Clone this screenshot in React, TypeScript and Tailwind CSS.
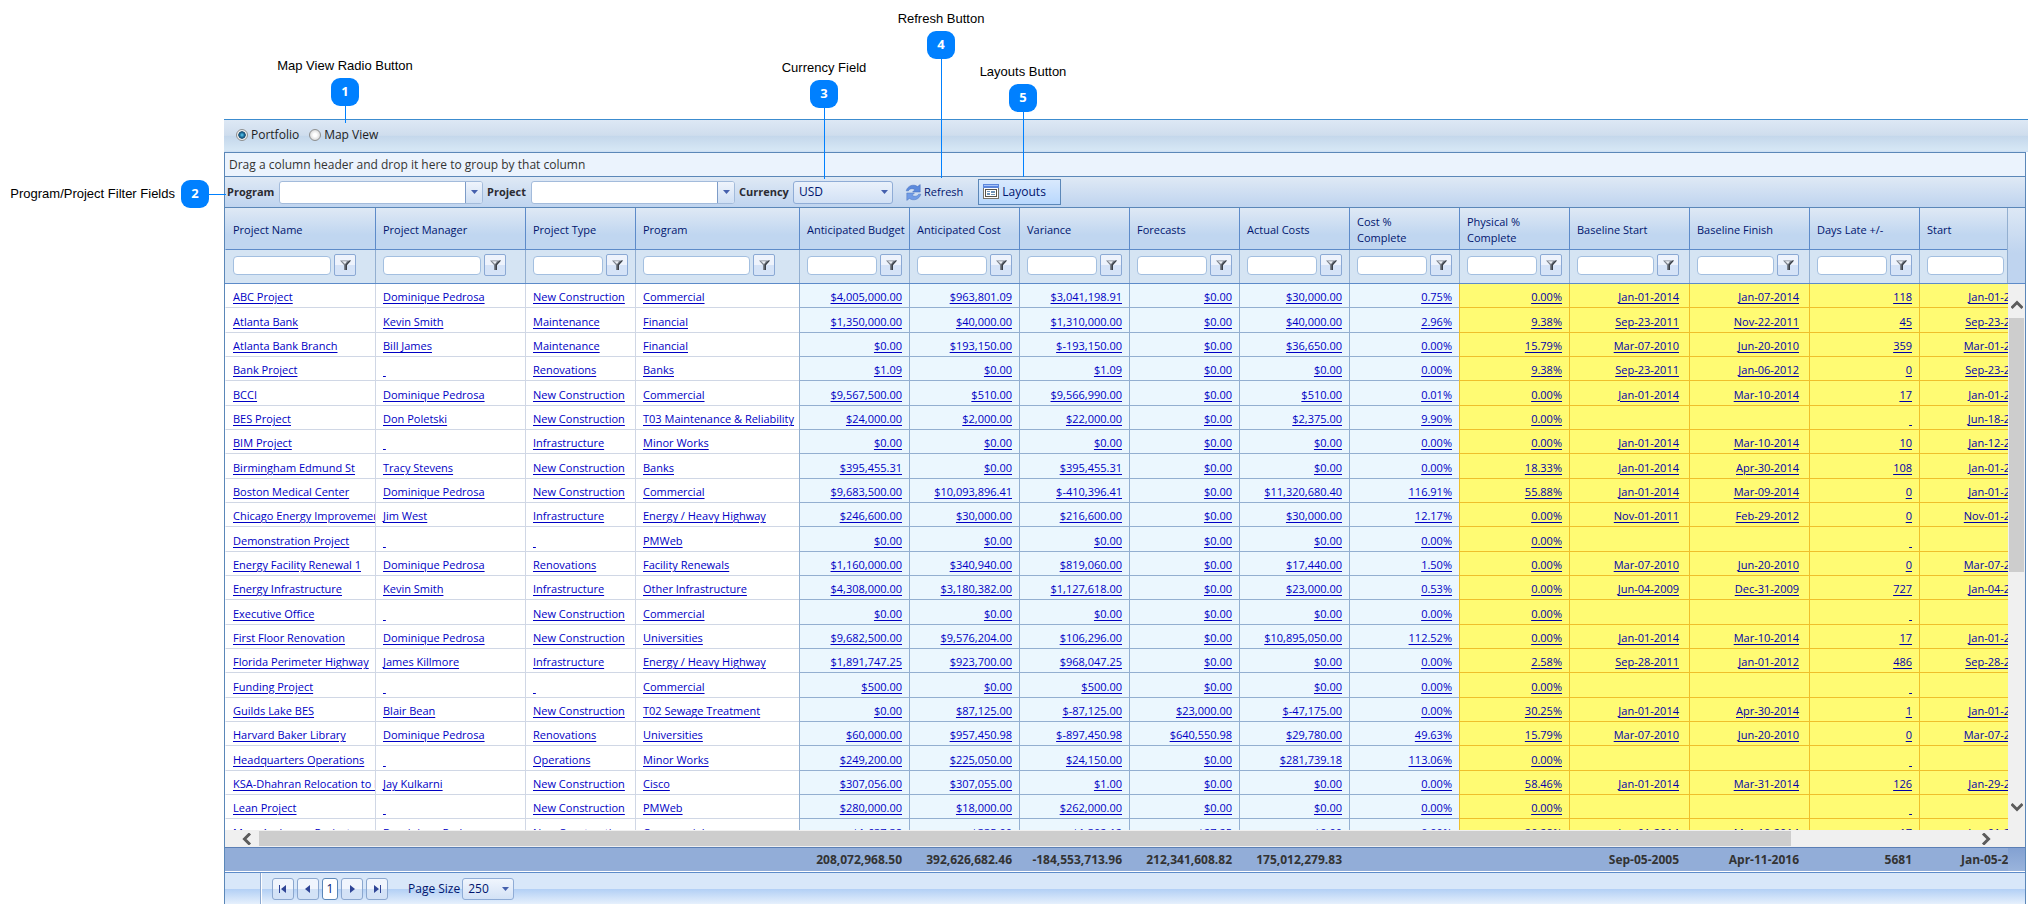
import React, { useState } from "react";

type Tone = "plain" | "cost" | "date";

interface Column {
  title: string;
  width: string;
  filter: string;
  tone: Tone;
  align: string;
  total?: string;
}

const columns: Column[] = [
  { title: "Project Name", width: "w-[150px]", filter: "w-[98px]", tone: "plain", align: "text-left" },
  { title: "Project Manager", width: "w-[150px]", filter: "w-[98px]", tone: "plain", align: "text-left" },
  { title: "Project Type", width: "w-[110px]", filter: "w-[70px]", tone: "plain", align: "text-left" },
  { title: "Program", width: "w-[164px]", filter: "w-[107px]", tone: "plain", align: "text-left" },
  { title: "Anticipated Budget", width: "w-[110px]", filter: "w-[70px]", tone: "cost", align: "text-right pr-[7px]", total: "208,072,968.50" },
  { title: "Anticipated Cost", width: "w-[110px]", filter: "w-[70px]", tone: "cost", align: "text-right pr-[7px]", total: "392,626,682.46" },
  { title: "Variance", width: "w-[110px]", filter: "w-[70px]", tone: "cost", align: "text-right pr-[7px]", total: "-184,553,713.96" },
  { title: "Forecasts", width: "w-[110px]", filter: "w-[70px]", tone: "cost", align: "text-right pr-[7px]", total: "212,341,608.82" },
  { title: "Actual Costs", width: "w-[110px]", filter: "w-[70px]", tone: "cost", align: "text-right pr-[7px]", total: "175,012,279.83" },
  { title: "Cost %\nComplete", width: "w-[110px]", filter: "w-[70px]", tone: "cost", align: "text-right pr-[7px]" },
  { title: "Physical %\nComplete", width: "w-[110px]", filter: "w-[70px]", tone: "date", align: "text-right pr-[7px]" },
  { title: "Baseline Start", width: "w-[120px]", filter: "w-[77px]", tone: "date", align: "text-right pr-[10px]", total: "Sep-05-2005" },
  { title: "Baseline Finish", width: "w-[120px]", filter: "w-[77px]", tone: "date", align: "text-right pr-[10px]", total: "Apr-11-2016" },
  { title: "Days Late +/-", width: "w-[110px]", filter: "w-[70px]", tone: "date", align: "text-right pr-[7px]", total: "5681" },
  { title: "Start", width: "w-[120px]", filter: "w-[77px]", tone: "date", align: "text-right pr-[10px]", total: "Jan-05-2009" },
];

// "_" is an empty link, "" is an empty cell
const projects: string[][] = [
  ["ABC Project", "Dominique Pedrosa", "New Construction", "Commercial", "$4,005,000.00", "$963,801.09", "$3,041,198.91", "$0.00", "$30,000.00", "0.75%", "0.00%", "Jan-01-2014", "Jan-07-2014", "118", "Jan-01-2014"],
  ["Atlanta Bank", "Kevin Smith", "Maintenance", "Financial", "$1,350,000.00", "$40,000.00", "$1,310,000.00", "$0.00", "$40,000.00", "2.96%", "9.38%", "Sep-23-2011", "Nov-22-2011", "45", "Sep-23-2011"],
  ["Atlanta Bank Branch", "Bill James", "Maintenance", "Financial", "$0.00", "$193,150.00", "$-193,150.00", "$0.00", "$36,650.00", "0.00%", "15.79%", "Mar-07-2010", "Jun-20-2010", "359", "Mar-01-2010"],
  ["Bank Project", "_", "Renovations", "Banks", "$1.09", "$0.00", "$1.09", "$0.00", "$0.00", "0.00%", "9.38%", "Sep-23-2011", "Jan-06-2012", "0", "Sep-23-2011"],
  ["BCCI", "Dominique Pedrosa", "New Construction", "Commercial", "$9,567,500.00", "$510.00", "$9,566,990.00", "$0.00", "$510.00", "0.01%", "0.00%", "Jan-01-2014", "Mar-10-2014", "17", "Jan-01-2014"],
  ["BES Project", "Don Poletski", "New Construction", "T03 Maintenance & Reliability", "$24,000.00", "$2,000.00", "$22,000.00", "$0.00", "$2,375.00", "9.90%", "0.00%", "", "", "_", "Jun-18-2013"],
  ["BIM Project", "_", "Infrastructure", "Minor Works", "$0.00", "$0.00", "$0.00", "$0.00", "$0.00", "0.00%", "0.00%", "Jan-01-2014", "Mar-10-2014", "10", "Jan-12-2014"],
  ["Birmingham Edmund St", "Tracy Stevens", "New Construction", "Banks", "$395,455.31", "$0.00", "$395,455.31", "$0.00", "$0.00", "0.00%", "18.33%", "Jan-01-2014", "Apr-30-2014", "108", "Jan-01-2014"],
  ["Boston Medical Center", "Dominique Pedrosa", "New Construction", "Commercial", "$9,683,500.00", "$10,093,896.41", "$-410,396.41", "$0.00", "$11,320,680.40", "116.91%", "55.88%", "Jan-01-2014", "Mar-09-2014", "0", "Jan-01-2014"],
  ["Chicago Energy Improvement", "Jim West", "Infrastructure", "Energy / Heavy Highway", "$246,600.00", "$30,000.00", "$216,600.00", "$0.00", "$30,000.00", "12.17%", "0.00%", "Nov-01-2011", "Feb-29-2012", "0", "Nov-01-2011"],
  ["Demonstration Project", "_", "_", "PMWeb", "$0.00", "$0.00", "$0.00", "$0.00", "$0.00", "0.00%", "0.00%", "", "", "_", ""],
  ["Energy Facility Renewal 1", "Dominique Pedrosa", "Renovations", "Facility Renewals", "$1,160,000.00", "$340,940.00", "$819,060.00", "$0.00", "$17,440.00", "1.50%", "0.00%", "Mar-07-2010", "Jun-20-2010", "0", "Mar-07-2010"],
  ["Energy Infrastructure", "Kevin Smith", "Infrastructure", "Other Infrastructure", "$4,308,000.00", "$3,180,382.00", "$1,127,618.00", "$0.00", "$23,000.00", "0.53%", "0.00%", "Jun-04-2009", "Dec-31-2009", "727", "Jan-04-2009"],
  ["Executive Office", "_", "New Construction", "Commercial", "$0.00", "$0.00", "$0.00", "$0.00", "$0.00", "0.00%", "0.00%", "", "", "_", ""],
  ["First Floor Renovation", "Dominique Pedrosa", "New Construction", "Universities", "$9,682,500.00", "$9,576,204.00", "$106,296.00", "$0.00", "$10,895,050.00", "112.52%", "0.00%", "Jan-01-2014", "Mar-10-2014", "17", "Jan-01-2014"],
  ["Florida Perimeter Highway", "James Killmore", "Infrastructure", "Energy / Heavy Highway", "$1,891,747.25", "$923,700.00", "$968,047.25", "$0.00", "$0.00", "0.00%", "2.58%", "Sep-28-2011", "Jan-01-2012", "486", "Sep-28-2011"],
  ["Funding Project", "_", "_", "Commercial", "$500.00", "$0.00", "$500.00", "$0.00", "$0.00", "0.00%", "0.00%", "", "", "_", ""],
  ["Guilds Lake BES", "Blair Bean", "New Construction", "T02 Sewage Treatment", "$0.00", "$87,125.00", "$-87,125.00", "$23,000.00", "$-47,175.00", "0.00%", "30.25%", "Jan-01-2014", "Apr-30-2014", "1", "Jan-01-2014"],
  ["Harvard Baker Library", "Dominique Pedrosa", "Renovations", "Universities", "$60,000.00", "$957,450.98", "$-897,450.98", "$640,550.98", "$29,780.00", "49.63%", "15.79%", "Mar-07-2010", "Jun-20-2010", "0", "Mar-07-2010"],
  ["Headquarters Operations", "_", "Operations", "Minor Works", "$249,200.00", "$225,050.00", "$24,150.00", "$0.00", "$281,739.18", "113.06%", "0.00%", "", "", "_", ""],
  ["KSA-Dhahran Relocation to D", "Jay Kulkarni", "New Construction", "Cisco", "$307,056.00", "$307,055.00", "$1.00", "$0.00", "$0.00", "0.00%", "58.46%", "Jan-01-2014", "Mar-31-2014", "126", "Jan-29-2014"],
  ["Lean Project", "_", "New Construction", "PMWeb", "$280,000.00", "$18,000.00", "$262,000.00", "$0.00", "$0.00", "0.00%", "0.00%", "", "", "_", ""],
  ["Mary Anderson Project", "Dominique Pedrosa", "New Construction", "Commercial", "$1,637.38", "$335.00", "$1,302.12", "$27.25", "$0.00", "0.00%", "20.28%", "Jan-01-2014", "Mar-10-2014", "17", "Jan-01-2014"],
];

const toneClass: Record<Tone, string> = {
  plain: "bg-white border-[#d0d7e5] text-[#0000c4]",
  cost: "bg-[#ebf7fe] border-[#93afd0] text-[#0000c4]",
  date: "bg-[#fffb73] border-[#efbf2b] text-[#0000a8]",
};

const callouts = [
  { n: 1, text: "Map View Radio Button", box: "left-[245px] top-[57px]", line: "h-[17px]" },
  { n: 3, text: "Currency Field", box: "left-[724px] top-[59px]", line: "h-[71px]" },
  { n: 4, text: "Refresh Button", box: "left-[841px] top-[10px]", line: "h-[119px]" },
  { n: 5, text: "Layouts Button", box: "left-[923px] top-[63px]", line: "h-[65px]" },
];

const Badge = ({ n }: { n: number }) => (
  <span className="flex h-[28px] w-[28px] shrink-0 items-center justify-center rounded-[9px] bg-[#0080ff] text-[13px] font-bold text-white">
    {n}
  </span>
);

const Caret = () => (
  <svg width="7" height="4" viewBox="0 0 7 4" aria-hidden="true">
    <path d="M0 0h7L3.500 4z" fill="#4560ad" />
  </svg>
);

const Combo = ({ id, label, labelWidth }: { id: string; label: string; labelWidth: string }) => (
  <div className="flex items-center">
    <label htmlFor={id} className={`${labelWidth} text-[11px] font-bold text-[#2b2b33]`}>
      {label}
    </label>
    <div className="flex h-[23px] w-[204px] overflow-hidden rounded-[3px] border border-[#a3bbdb] bg-white">
      <input id={id} type="text" className="min-w-0 flex-1 px-1 text-[12px] outline-none" />
      <button
        type="button"
        aria-label={`Open ${label} list`}
        className="flex w-[17px] items-center justify-center border-l border-[#7d9cc8] bg-linear-to-b from-[#eff4fc] to-[#cfdff4]"
      >
        <Caret />
      </button>
    </div>
  </div>
);

const RefreshIcon = () => (
  <svg width="17" height="17" viewBox="0 0 17 17" aria-hidden="true">
    <path d="M1.200 6.800C2.800 1.200 8.800-.2 12.600 2.600L15.200.6V8H7.600l2.300-2.300C7.600 4 4.400 4.600 3.400 6.800z" fill="#5b8add" stroke="#4069b8" strokeWidth=".5" />
    <path d="M15.800 10.200C14.200 15.800 8.200 17.200 4.400 14.400L1.800 16.400V9h7.600l-2.300 2.300c2.300 1.700 5.500 1.100 6.500-1.100z" fill="#719ce6" stroke="#4a74bf" strokeWidth=".5" />
  </svg>
);

const LayoutsIcon = () => (
  <svg width="16" height="16" viewBox="0 0 16 16" aria-hidden="true">
    <rect x=".5" y=".5" width="15" height="14" fill="#fff" stroke="#77736b" />
    <rect x="0" y="0" width="16" height="4" fill="#5b86dd" />
    <rect x="1" y="1" width="14" height="1" fill="#a9c4f7" />
    <rect x="2.500" y="5.500" width="11" height="7" fill="#fff" stroke="#57534a" />
    <path d="M4 7h3v1H4zM8 7h4v2H8zM4 9h3v2H4zM8 10h4v1H8z" fill="#6f93b8" />
  </svg>
);

const FilterIcon = () => (
  <svg width="11" height="10" viewBox="0 0 11 10" aria-hidden="true">
    <path d="M0 .5h11L7 5v5H4V5z" fill="#7d848e" />
    <path d="M2 1.300h5L5 4z" fill="#eef1f6" />
    <path d="M11 .5L7 5v5H5.500V4.600L9.500.5z" fill="#3a3f46" />
  </svg>
);

const Chevron = ({ d }: { d: string }) => (
  <svg width="12" height="12" viewBox="0 0 12 12" fill="none" stroke="#5c5c5c" strokeWidth="3" aria-hidden="true">
    <path d={d} />
  </svg>
);

const ColGroup = () => (
  <colgroup>
    {columns.map((c) => (
      <col key={c.title} className={c.width} />
    ))}
  </colgroup>
);

const PagerButton = ({ label, d }: { label: string; d: string }) => (
  <button
    type="button"
    aria-label={label}
    className="flex h-[22px] w-[22px] items-center justify-center rounded-[3px] border border-[#8ba7cf] bg-linear-to-b from-[#f0f5fd] from-50% to-[#d3e2f6] to-50%"
  >
    <svg width="8" height="8" viewBox="0 0 8 8" aria-hidden="true">
      <path d={d} fill="#2f4596" />
    </svg>
  </button>
);

export default function App() {
  const [view, setView] = useState("portfolio");
  const views = [
    { id: "portfolio", label: "Portfolio" },
    { id: "map", label: "Map View" },
  ];

  return (
    <div className="relative overflow-hidden bg-white font-['Open_Sans','Noto_Sans',sans-serif] text-[11px]">
      <div className="mt-[119px] mr-[3px] mb-[3px] ml-[224px]">
        {/* View switch */}
        <div className="flex h-[33px] items-center gap-[10px] border-t border-[#3c8ccf] bg-[linear-gradient(to_bottom,#dde8f5,#cfdded_48%,#c4d7eb_50%,#d6e7f5_94%,#c9dcf3)] pb-[3px] pl-[12px] text-[12px] text-[#1c1c24]">
          {views.map((v) => (
            <label key={v.id} className="flex items-center gap-[3px]">
              <input
                type="radio"
                name="view"
                checked={view === v.id}
                onChange={() => setView(v.id)}
                className="h-[12px] w-[12px] appearance-none rounded-full border border-[#8e8f8f] bg-[radial-gradient(circle_closest-side,#ffffff_30%,#dcdcdc)] checked:bg-[radial-gradient(circle_closest-side,#5fd0f5_0%,#1d6c99_45%,#134a70_68%,#eeeeee_80%)]"
              />
              {v.label}
            </label>
          ))}
        </div>

        <div className="mr-[2px] border-t border-r border-l border-[#5b87b8]">
          <div className="flex h-[23px] items-center bg-[#ebf3fd] px-1 text-[12px] text-[#333]">
            Drag a column header and drop it here to group by that column
          </div>

          {/* Toolbar */}
          <div className="flex h-[32px] items-center border-y border-[#5b87b8] bg-linear-to-b from-[#dfe9f5] to-[#bfd4ef] pl-[2px]">
            <div className="flex items-center gap-1">
              <Combo id="program" label="Program" labelWidth="w-[52px]" />
              <Combo id="project" label="Project" labelWidth="w-[44px]" />
              <div className="flex items-center">
                <label htmlFor="currency" className="w-[54px] text-[11px] font-bold text-[#2b2b33]">
                  Currency
                </label>
                <div className="relative">
                  <select
                    id="currency"
                    className="block h-[23px] w-[100px] appearance-none rounded-[3px] border border-[#8facd6] bg-linear-to-b from-[#eaf1fb] to-[#d2e1f5] pl-[5px] text-[12px] text-[#00156e]"
                  >
                    <option>USD</option>
                  </select>
                  <span className="pointer-events-none absolute top-[9px] right-[5px]">
                    <Caret />
                  </span>
                </div>
              </div>
            </div>
            <button type="button" className="ml-3 flex items-center gap-[2px] text-[11px] text-[#00156e]">
              <RefreshIcon />
              Refresh
            </button>
            <button
              type="button"
              className="ml-[15px] flex h-[26px] w-[83px] items-center gap-[3px] border border-[#5b87b8] bg-linear-to-b from-[#d9e9fd] to-[#b9d8fd] pl-1 text-[12px] text-[#00156e]"
            >
              <LayoutsIcon />
              Layouts
            </button>
          </div>

          {/* Column headers and filters */}
          <div className="flex border-b border-[#5d8bc9] bg-linear-to-b from-[#dde8f5] to-[#bfd4ef] to-60%">
            <div className="min-w-0 flex-1 overflow-hidden border-r border-[#93afd0]">
              <table className="w-[1814px] table-fixed border-separate border-spacing-0">
                <ColGroup />
                <thead>
                  <tr className="h-[42px]">
                    {columns.map((c) => (
                      <th
                        key={c.title}
                        scope="col"
                        className="border-b border-l border-[#5d8bc9] bg-linear-to-b from-[#dfe9f5] to-[#c0d6f0] to-65% p-0 pt-[2px] pl-[7px] text-left text-[11px] leading-4 font-normal whitespace-pre-line text-[#00156e] first:border-l-transparent"
                      >
                        {c.title}
                      </th>
                    ))}
                  </tr>
                  <tr className="h-[33px]">
                    {columns.map((c) => (
                      <td key={c.title} className="border-l border-[#93afd0] bg-[#d5e4f3] p-0 pb-[3px] pl-[7px] first:border-l-transparent">
                        <div className="flex items-center gap-[3px]">
                          <input
                            type="text"
                            aria-label={`Filter ${c.title}`}
                            className={`${c.filter} h-[19px] rounded-[4px] border border-[#a3bfe0] bg-white px-1 outline-none`}
                          />
                          <button
                            type="button"
                            aria-label={`Filter options for ${c.title}`}
                            className="flex h-[22px] w-[22px] shrink-0 items-center justify-center rounded-[2px] border border-[#8ba9d4] bg-linear-to-b from-[#eef3fc] from-50% to-[#d5e3f7] to-50%"
                          >
                            <FilterIcon />
                          </button>
                        </div>
                      </td>
                    ))}
                  </tr>
                </thead>
              </table>
            </div>
            <div className="w-[17px] shrink-0" />
          </div>

          {/* Rows with both scroll bars */}
          <div className="flex h-[563px]">
            <div className="flex min-w-0 flex-1 flex-col">
              <div className="min-h-0 flex-1 overflow-hidden">
                <table className="w-[1814px] table-fixed border-separate border-spacing-0">
                  <ColGroup />
                  <tbody>
                    {projects.map((row) => (
                      <tr key={row[0]} className="h-[24px] [&:nth-child(3n+2)]:h-[25px]">
                        {row.map((cell, i) => (
                          <td
                            key={i}
                            className={`overflow-hidden border-b border-l p-0 pt-[3px] pl-[7px] leading-4 whitespace-nowrap first:border-l-white ${toneClass[columns[i].tone]} ${columns[i].align}`}
                          >
                            {cell !== "" && (
                              <a href="#" className="underline underline-offset-2">
                                {cell === "_" ? "\u00a0" : cell}
                              </a>
                            )}
                          </td>
                        ))}
                      </tr>
                    ))}
                  </tbody>
                </table>
              </div>
              <div className="flex h-[17px] shrink-0 items-center bg-[#f0f0f0]">
                <span className="flex w-[34px] items-center justify-end pr-[6px]">
                  <Chevron d="M9 0.500L3.500 6 9 11.500" />
                </span>
                <div className="h-[15px] flex-1 bg-[#cdcdcd]" />
                <span className="flex w-[217px] items-center justify-end pr-[16px]">
                  <Chevron d="M3 0.500L8.500 6 3 11.500" />
                </span>
              </div>
            </div>
            <div className="flex w-[17px] shrink-0 flex-col items-center bg-[#f0f0f0]">
              <span className="flex h-[34px] items-end pb-[7px]">
                <Chevron d="M0.500 9L6 3.500 11.500 9" />
              </span>
              <div className="h-[254px] w-[15px] bg-[#cdcdcd]" />
              <span className="mt-auto pb-[34px]">
                <Chevron d="M0.500 3L6 8.500 11.500 3" />
              </span>
            </div>
          </div>

          {/* Totals */}
          <div className="flex border-t border-b border-t-[#5b7fb5] border-b-white bg-[#92add8]">
            <div className="min-w-0 flex-1 overflow-hidden">
              <table className="w-[1814px] table-fixed border-separate border-spacing-0">
                <ColGroup />
                <tbody>
                  <tr className="h-[23px]">
                    {columns.map((c) => (
                      <td key={c.title} className={`p-0 text-[12px] font-bold whitespace-nowrap text-[#333] ${c.align}`}>
                        {c.total}
                      </td>
                    ))}
                  </tr>
                </tbody>
              </table>
            </div>
            <div className="w-[17px] shrink-0 bg-linear-to-b from-[#83a1d2] to-[#9ab4dc]" />
          </div>

          {/* Pager */}
          <div className="flex h-[32px] border-t border-[#5d8bc9] bg-[linear-gradient(to_bottom,#d8e7f9_50%,#b0cef5_50%,#e6f0fc)]">
            <div className="w-[36px] border-r border-[#8ba7cf]" />
            <nav aria-label="Pages" className="flex items-center gap-[3px] border-l border-white pl-[10px]">
              <PagerButton label="First page" d="M0 0h1v8H0zM7 0v8L2 4z" />
              <PagerButton label="Previous page" d="M6 0v8L1 4z" />
              <button
                type="button"
                aria-current="page"
                className="flex h-[22px] w-[16px] items-center justify-center rounded-[3px] border border-[#5b87b8] bg-white text-[12px] text-[#00156e]"
              >
                1
              </button>
              <PagerButton label="Next page" d="M2 0v8l5-4z" />
              <PagerButton label="Last page" d="M7 0h1v8H7zM1 0v8l5-4z" />
            </nav>
            <div className="ml-5 flex items-center gap-[2px] text-[12px] text-[#00156e]">
              <label htmlFor="page-size">Page Size</label>
              <div className="relative">
                <select
                  id="page-size"
                  className="block h-[22px] w-[52px] appearance-none rounded-[3px] border border-[#8facd6] bg-linear-to-b from-[#f0f5fd] to-[#d3e2f6] pl-[5px] text-[12px]"
                >
                  <option>250</option>
                </select>
                <span className="pointer-events-none absolute top-[9px] right-[5px]">
                  <Caret />
                </span>
              </div>
            </div>
          </div>
        </div>
      </div>

      {/* Callouts over the screen */}
      {callouts.map((c) => (
        <div key={c.n} className={`absolute flex w-[200px] flex-col items-center ${c.box} gap-[3px]`}>
          <span className="font-['Liberation_Sans',Arial,sans-serif] text-[13px] leading-[18px] text-black">{c.text}</span>
          <div className="flex flex-col items-center">
            <Badge n={c.n} />
            <span className={`w-px bg-[#0080ff] ${c.line}`} />
          </div>
        </div>
      ))}
      <div className="absolute top-[180px] left-0 flex h-[28px] w-[226px] items-center">
        <span className="w-[181px] pr-[6px] text-right font-['Liberation_Sans',Arial,sans-serif] text-[13px] text-black">
          Program/Project Filter Fields
        </span>
        <Badge n={2} />
        <span className="h-px flex-1 bg-[#0080ff]" />
      </div>
    </div>
  );
}
